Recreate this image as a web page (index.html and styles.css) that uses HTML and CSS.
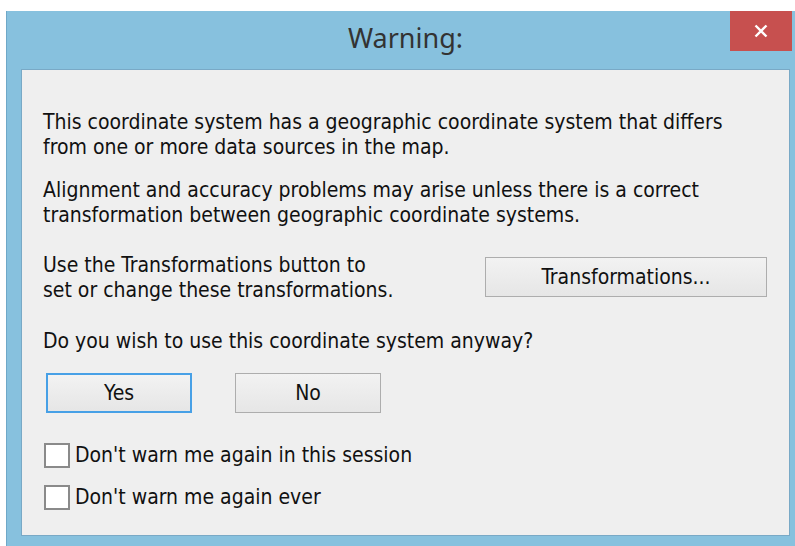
FILE: index.html
```html
<!DOCTYPE html>
<html lang="en">
<head>
<meta charset="utf-8">
<title>Warning:</title>
<link rel="stylesheet" href="styles.css">
</head>
<body>
<div class="window">
  <div class="titlebar">
    <span class="spacer"></span>
    <h1 class="title">Warning:</h1>
    <button class="close" type="button" aria-label="Close">
      <svg width="14" height="14" viewBox="0 0 14 14" aria-hidden="true">
        <path d="M1.5 1.5 L12.5 12.5 M12.5 1.5 L1.5 12.5" stroke="#fff" stroke-width="2.4" fill="none"/>
      </svg>
    </button>
  </div>
  <div class="client">
    <p class="msg">This coordinate system has a geographic coordinate system that differs<br>from one or more data sources in the map.</p>
    <p class="msg msg-2">Alignment and accuracy problems may arise unless there is a correct<br>transformation between geographic coordinate systems.</p>
    <div class="transform-row">
      <p class="msg">Use the Transformations button to<br>set or change these transformations.</p>
      <button class="btn btn-wide" type="button">Transformations...</button>
    </div>
    <p class="msg question">Do you wish to use this coordinate system anyway?</p>
    <div class="actions">
      <button class="btn btn-default" type="button">Yes</button>
      <button class="btn" type="button">No</button>
    </div>
    <label class="check check-1"><span class="box"></span>Don't warn me again in this session</label>
    <label class="check check-2"><span class="box"></span>Don't warn me again ever</label>
  </div>
</div>
</body>
</html>
```

FILE: styles.css
```css
html, body {
  margin: 0;
  padding: 0;
  background: #ffffff;
  overflow: hidden;
}

body {
  width: 795px;
  height: 546px;
  padding: 11px 0 0 6px;
  box-sizing: border-box;
}

.window {
  width: 798px;
  background: #87c1de;
  border-left: 1px solid #6fa8c8;
  padding: 0 14px 10px 14px;
  box-sizing: border-box;
}

.titlebar {
  display: grid;
  grid-template-columns: 1fr auto 1fr;
  align-items: start;
  height: 58px;
}

.title {
  margin: 0;
  padding-top: 8px;
  font-family: "Noto Sans", "Open Sans", sans-serif;
  font-weight: 400;
  font-size: 27px;
  line-height: 38px;
  color: #333333;
}

.close {
  justify-self: end;
  margin-right: -2px;
  width: 62px;
  height: 40px;
  border: 0;
  padding: 0;
  background: #c7504f;
  display: flex;
  align-items: center;
  justify-content: center;
}

.client {
  background: #efefef;
  border: 1px solid #79a9c6;
  height: 467px;
  box-sizing: border-box;
  padding: 40px 21px 0 21px;
  font-family: "DejaVu Sans Condensed", "DejaVu Sans", sans-serif;
  font-size: 21px;
  color: #111;
}

.msg {
  margin: 0;
  line-height: 25px;
}

.msg-2 {
  margin-top: 18px;
}

.transform-row {
  display: flex;
  justify-content: space-between;
  align-items: center;
  margin-top: 25px;
}

.btn {
  font: inherit;
  color: #111;
  height: 40px;
  width: 146px;
  padding: 0;
  border: 1px solid #adadad;
  background: linear-gradient(#f2f2f2, #e6e6e6);
}

.btn-wide {
  width: 282px;
  margin-right: 1px;
  margin-top: -3px;
}

.btn-default {
  border: 2px solid #47a0e6;
}

.question {
  margin-top: 26px;
}

.actions {
  display: flex;
  gap: 43px;
  margin-top: 19px;
  padding-left: 3px;
}

.check {
  display: flex;
  align-items: center;
  gap: 5px;
  line-height: 25px;
  padding-left: 1px;
}

.check-1 {
  margin-top: 30px;
}

.check-2 {
  margin-top: 17px;
}

.box {
  width: 26px;
  height: 25px;
  flex: none;
  box-sizing: border-box;
  border: 2px solid #8a8a8a;
  background: #ffffff;
}
```
